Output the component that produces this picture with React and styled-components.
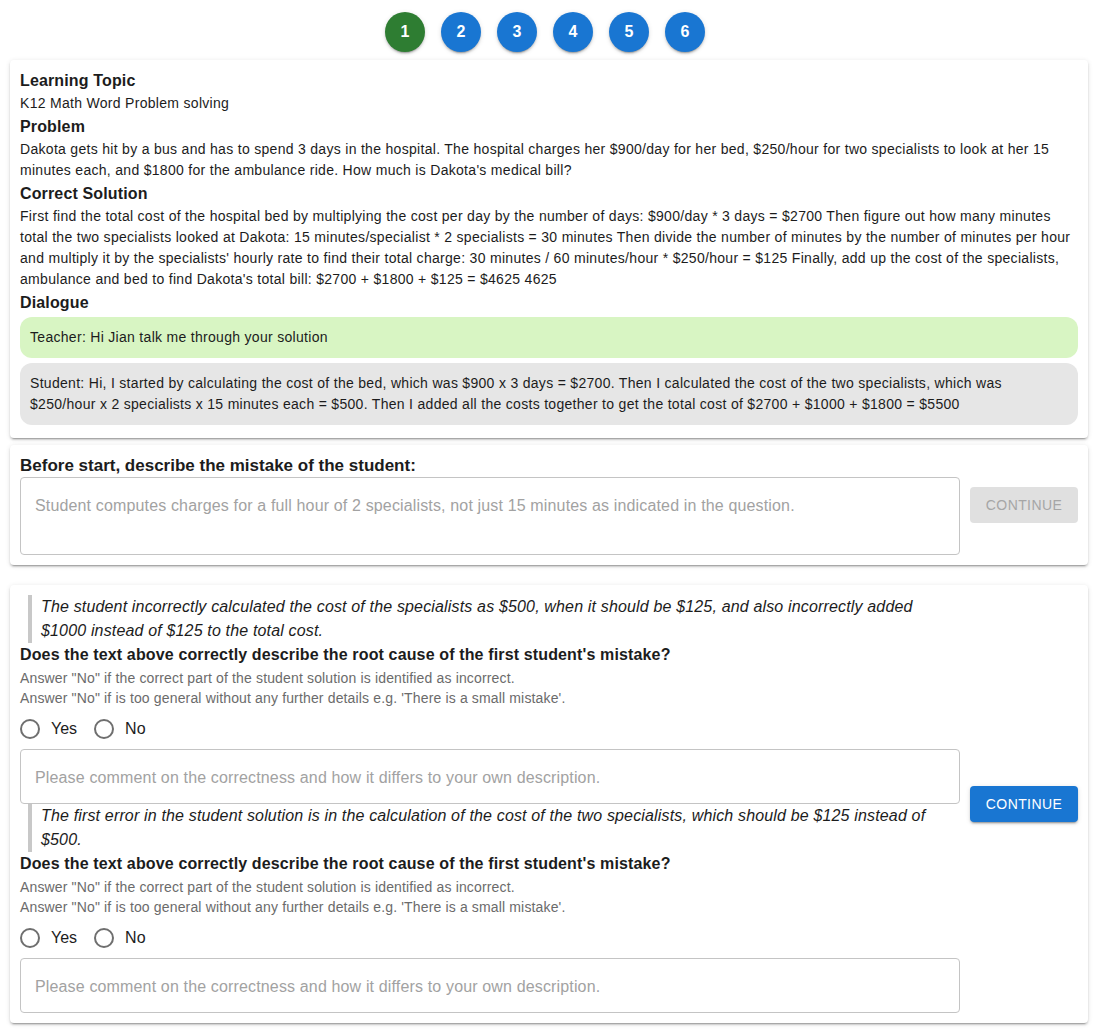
import React, { useState } from 'react';
import styled, { createGlobalStyle } from 'styled-components';

const GlobalStyle = createGlobalStyle`
  body {
    margin: 0;
    background: #fff;
    font-family: "Liberation Sans", Arial, sans-serif;
    color: #1c1c1c;
  }
  * { box-sizing: border-box; }
`;

const steps = [1, 2, 3, 4, 5, 6];

const reviews = [
  {
    id: 1,
    quote: 'The student incorrectly calculated the cost of the specialists as $500, when it should be $125, and also incorrectly added $1000 instead of $125 to the total cost.',
  },
  {
    id: 2,
    quote: 'The first error in the student solution is in the calculation of the cost of the two specialists, which should be $125 instead of $500.',
  },
];

const App = () => {
  const [answers, setAnswers] = useState({});

  return (
    <>
      <GlobalStyle />
      <Page>
        <Stepper>
          {steps.map((s) => (
            <StepDot key={s} $active={s === 1}>{s}</StepDot>
          ))}
        </Stepper>

        <Card $gap={7}>
          <Heading>Learning Topic</Heading>
          <Body>K12 Math Word Problem solving</Body>
          <Heading>Problem</Heading>
          <Body>
            Dakota gets hit by a bus and has to spend 3 days in the hospital. The hospital charges her $900/day for her bed, $250/hour for two specialists to look at her 15 minutes each, and $1800 for the ambulance ride. How much is Dakota's medical bill?
          </Body>
          <Heading>Correct Solution</Heading>
          <Body>
            First find the total cost of the hospital bed by multiplying the cost per day by the number of days: $900/day * 3 days = $2700 Then figure out how many minutes total the two specialists looked at Dakota: 15 minutes/specialist * 2 specialists = 30 minutes Then divide the number of minutes by the number of minutes per hour and multiply it by the specialists' hourly rate to find their total charge: 30 minutes / 60 minutes/hour * $250/hour = $125 Finally, add up the cost of the specialists, ambulance and bed to find Dakota's total bill: $2700 + $1800 + $125 = $4625 4625
          </Body>
          <Heading>Dialogue</Heading>
          <Bubble $teacher>Teacher: Hi Jian talk me through your solution</Bubble>
          <Bubble>
            Student: Hi, I started by calculating the cost of the bed, which was $900 x 3 days = $2700. Then I calculated the cost of the two specialists, which was $250/hour x 2 specialists x 15 minutes each = $500. Then I added all the costs together to get the total cost of $2700 + $1000 + $1800 = $5500
          </Bubble>
        </Card>

        <Card $gap={20}>
          <Row>
            <Column>
              <Label>Before start, describe the mistake of the student:</Label>
              <TextBox
                rows={2}
                placeholder="Student computes charges for a full hour of 2 specialists, not just 15 minutes as indicated in the question."
              />
            </Column>
            <Button disabled>Continue</Button>
          </Row>
        </Card>

        <Card $gap={6} $top={10}>
          <Row>
            <Column>
              {reviews.map((r) => (
                <div key={r.id}>
                  <Quote>{r.quote}</Quote>
                  <Heading>Does the text above correctly describe the root cause of the first student's mistake?</Heading>
                  <Hints>
                    <Hint>Answer "No" if the correct part of the student solution is identified as incorrect.</Hint>
                    <Hint>Answer "No" if is too general without any further details e.g. 'There is a small mistake'.</Hint>
                  </Hints>
                  <RadioRow>
                    {['Yes', 'No'].map((opt) => (
                      <RadioLabel key={opt}>
                        <HiddenInput
                          type="radio"
                          name={`q${r.id}`}
                          checked={answers[r.id] === opt}
                          onChange={() => setAnswers({ ...answers, [r.id]: opt })}
                        />
                        <RadioCircle $checked={answers[r.id] === opt} />
                        {opt}
                      </RadioLabel>
                    ))}
                  </RadioRow>
                  <TextBox rows={1} placeholder="Please comment on the correctness and how it differs to your own description." />
                </div>
              ))}
            </Column>
            <Button>Continue</Button>
          </Row>
        </Card>
      </Page>
    </>
  );
};

const Page = styled.div`
  padding: 12px 9px 0 10px;
`;

const Stepper = styled.div`
  display: flex;
  justify-content: center;
  gap: 16px;
  margin-bottom: 8px;
  padding-right: 8px;
`;

const StepDot = styled.div`
  width: 40px;
  height: 40px;
  border-radius: 50%;
  display: flex;
  align-items: center;
  justify-content: center;
  background: ${(p) => (p.$active ? '#2e7d32' : '#1976d2')};
  color: #fff;
  font-weight: bold;
  font-size: 16px;
  box-shadow: 0 3px 1px -2px rgba(0,0,0,0.2), 0 2px 2px 0 rgba(0,0,0,0.14), 0 1px 5px 0 rgba(0,0,0,0.12);
`;

const Card = styled.div`
  background: #fff;
  border-radius: 4px;
  padding: ${(p) => p.$top || 9}px 10px 10px;
  margin-bottom: ${(p) => p.$gap}px;
  box-shadow: 0 3px 1px -2px rgba(0,0,0,0.2), 0 2px 2px 0 rgba(0,0,0,0.14), 0 1px 5px 0 rgba(0,0,0,0.12);
`;

const Heading = styled.div`
  font-size: 16px;
  font-weight: bold;
  line-height: 24px;
  letter-spacing: 0.14px;
  color: #1c1c1c;
`;

const Label = styled.div`
  font-size: 17px;
  font-weight: bold;
  line-height: 23px;
  color: #1c1c1c;
`;

const Body = styled.div`
  font-size: 14px;
  line-height: 21px;
  letter-spacing: 0.3px;
  margin-bottom: 1px;
`;

const Bubble = styled.div`
  background: ${(p) => (p.$teacher ? '#d8f5c3' : '#e6e6e6')};
  border-radius: 12px;
  padding: 10px;
  font-size: 14px;
  line-height: 21px;
  letter-spacing: 0.3px;
  margin-top: ${(p) => (p.$teacher ? '2px' : '5px')};
  margin-bottom: ${(p) => (p.$teacher ? '0' : '3px')};
`;

const Row = styled.div`
  display: flex;
  align-items: center;
  gap: 10px;
`;

const Column = styled.div`
  flex: 1;
  min-width: 0;
`;

const TextBox = styled.textarea`
  display: block;
  width: 100%;
  border: 1px solid #c4c4c4;
  border-radius: 4px;
  padding: 16px 14px 14px;
  font-family: "Liberation Sans", Arial, sans-serif;
  font-size: 16px;
  line-height: 23px;
  letter-spacing: 0.15px;
  resize: none;
  outline: none;
  color: #1c1c1c;
  &::placeholder {
    color: #a2a2a2;
  }
`;

const Button = styled.button`
  width: 108px;
  height: 36px;
  border: none;
  border-radius: 4px;
  font-family: "Liberation Sans", Arial, sans-serif;
  font-size: 14px;
  font-weight: 500;
  letter-spacing: 0.4px;
  text-transform: uppercase;
  background: #1976d2;
  color: #fff;
  cursor: pointer;
  box-shadow: 0 3px 1px -2px rgba(0,0,0,0.2), 0 2px 2px 0 rgba(0,0,0,0.14), 0 1px 5px 0 rgba(0,0,0,0.12);

  &:disabled {
    background: #e0e0e0;
    color: #a6a6a6;
    box-shadow: none;
    cursor: default;
  }
`;

const Quote = styled.blockquote`
  margin: 0 10px 0 8px;
  border-left: 4px solid #c8c8c8;
  padding-left: 9px;
  font-style: italic;
  font-size: 16px;
  line-height: 24px;
  letter-spacing: 0.16px;
  color: #1c1c1c;
`;

const Hints = styled.div`
  margin-top: 1px;
`;

const Hint = styled.div`
  font-size: 14px;
  line-height: 20px;
  letter-spacing: 0.15px;
  color: #6b6b6b;
`;

const RadioRow = styled.div`
  display: flex;
  align-items: center;
  height: 41px;
`;

const RadioLabel = styled.label`
  display: flex;
  align-items: center;
  gap: 11px;
  margin-right: 17px;
  font-size: 16px;
  cursor: pointer;
`;

const HiddenInput = styled.input`
  display: none;
`;

const RadioCircle = styled.span`
  width: 20px;
  height: 20px;
  border-radius: 50%;
  border: 2px solid #6f6f6f;
  background: ${(p) => (p.$checked ? 'radial-gradient(circle, #1976d2 0 4px, #fff 5px)' : '#fff')};
`;

export default App;
